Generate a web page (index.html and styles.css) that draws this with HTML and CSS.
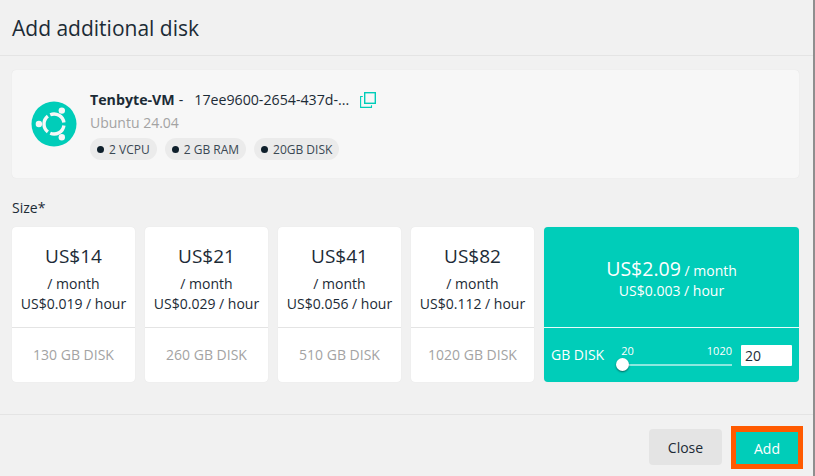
FILE: index.html
```html
<!DOCTYPE html>
<html lang="en">

<head>
  <meta charset="UTF-8">
  <meta name="viewport" content="width=device-width, initial-scale=1.0">
  <title>Add additional disk</title>
  <link rel="stylesheet" href="styles.css">
</head>

<body>
  <div class="modal">
    <header class="modal-head">
      <h1>Add additional disk</h1>
    </header>

    <div class="modal-body">
      <section class="vm-box">
        <svg class="os-logo" viewBox="0 0 46 46" width="46" height="46">
          <circle cx="23" cy="23" r="22.5" fill="#00cdb9"/>
          <g fill="none" stroke="#f7f7f7" stroke-width="3.4">
            <path d="M32.9 24.4A10 10 0 0 1 19.25 32.27"/>
            <path d="M16.84 30.88A10 10 0 0 1 16.84 15.12"/>
            <path d="M19.25 13.73A10 10 0 0 1 32.9 21.6"/>
          </g>
          <circle cx="7.9" cy="23" r="3.2" fill="#f7f7f7"/>
          <circle cx="30.8" cy="9.6" r="3.2" fill="#f7f7f7"/>
          <circle cx="30.8" cy="36.2" r="3.2" fill="#f7f7f7"/>
        </svg>
        <div class="vm-info">
          <div class="vm-title">
            <strong>Tenbyte-VM</strong><span class="dash">-</span><span class="vm-id">17ee9600-2654-437d-...</span>
            <svg class="copy-icon" viewBox="0 0 16 16" width="16" height="16">
              <rect x="4.7" y="0.7" width="10.6" height="10.6" fill="none" stroke="#00cdb9" stroke-width="1.4"/>
              <path d="M2.8 4.5H0.6V15.4H11.5V13.2" fill="none" stroke="#00cdb9" stroke-width="1.1"/>
            </svg>
          </div>
          <div class="vm-os">Ubuntu 24.04</div>
          <div class="chips">
            <span class="chip"><i></i>2 VCPU</span>
            <span class="chip"><i></i>2 GB RAM</span>
            <span class="chip"><i></i>20GB DISK</span>
          </div>
        </div>
      </section>

      <div class="size-label">Size*</div>

      <div class="plans">
        <div class="plan">
          <div class="plan-price">
            <div class="big">US$14</div>
            <div>/ month</div>
            <div>US$0.019 / hour</div>
          </div>
          <div class="plan-disk">130 GB DISK</div>
        </div>
        <div class="plan">
          <div class="plan-price">
            <div class="big">US$21</div>
            <div>/ month</div>
            <div>US$0.029 / hour</div>
          </div>
          <div class="plan-disk">260 GB DISK</div>
        </div>
        <div class="plan">
          <div class="plan-price">
            <div class="big">US$41</div>
            <div>/ month</div>
            <div>US$0.056 / hour</div>
          </div>
          <div class="plan-disk">510 GB DISK</div>
        </div>
        <div class="plan">
          <div class="plan-price">
            <div class="big">US$82</div>
            <div>/ month</div>
            <div>US$0.112 / hour</div>
          </div>
          <div class="plan-disk">1020 GB DISK</div>
        </div>

        <div class="plan custom">
          <div class="custom-price">
            <div><span class="big">US$2.09</span> / month</div>
            <div>US$0.003 / hour</div>
          </div>
          <div class="custom-disk">
            <span class="custom-label">GB DISK</span>
            <div class="slider">
              <div class="slider-marks"><span>20</span><span>1020</span></div>
              <div class="slider-track"><span class="slider-thumb"></span></div>
            </div>
            <input class="disk-input" type="text" value="20">
          </div>
        </div>
      </div>
    </div>

    <footer class="modal-foot">
      <button class="btn btn-close" type="button">Close</button>
      <button class="btn btn-add" type="button">Add</button>
    </footer>
  </div>
</body>
</html>
```

FILE: styles.css
```css
:root {
  --teal: #00cdb9;
  --text-color: #1c2b36;
  --muted: #a3a3a3;
  --line: #e4e4e4;
}
html {
  font-family: "Open Sans", "Noto Sans", Arial, sans-serif;
}
body {
  margin: 0;
  background: #fff;
  color: var(--text-color);
}
.modal {
  width: 813px;
  height: 476px;
  background: #f1f1f1;
  border-right: 2px solid #8f8f8f;
  display: flex;
  flex-direction: column;
  overflow: hidden;
}
.modal-head {
  height: 56px;
  box-sizing: border-box;
  flex: none;
  padding: 13px 12px 0;
  border-bottom: 1px solid var(--line);
}
h1 {
  margin: 0;
  font-size: 21px;
  line-height: 30px;
  font-weight: 400;
}
.modal-body {
  flex: 1;
  padding: 14px 14px 0 12px;
}
.vm-box {
  height: 108px;
  box-sizing: border-box;
  background: #f7f7f7;
  border-radius: 4px;
  box-shadow: 0 0 1px rgba(0,0,0,.1);
  display: flex;
  align-items: center;
  padding: 2px 18px 0 19px;
  gap: 13px;
}
.os-logo { flex: none; margin-top: -2px; }
.vm-title {
  display: flex;
  align-items: center;
  font-size: 14.2px;
  line-height: 20px;
}
.vm-title strong { font-weight: 700; }
.dash { margin: 0 11px 0 4px; }
.copy-icon { margin-left: 11px; }
.vm-os {
  font-size: 14px;
  line-height: 20px;
  color: var(--muted);
  margin-top: 3px;
}
.chips {
  display: flex;
  gap: 8px;
  margin-top: 5px;
}
.chip {
  display: flex;
  align-items: center;
  height: 22px;
  padding: 0 7px;
  border-radius: 11px;
  background: #ebebeb;
  font-size: 12px;
  color: #3a4853;
}
.chip i {
  width: 7px;
  height: 7px;
  border-radius: 50%;
  background: #0e1f2b;
  margin-right: 5px;
}
.size-label {
  font-size: 14px;
  line-height: 20px;
  margin-top: 20px;
}
.plans {
  display: flex;
  gap: 10px;
  margin-top: 9px;
}
.plan {
  width: 123px;
  height: 155px;
  flex: none;
  background: #fff;
  border-radius: 4px;
  box-shadow: 0 0 1px rgba(0,0,0,.1);
  text-align: center;
  font-size: 14px;
  line-height: 20px;
}
.plan-price {
  height: 101px;
  box-sizing: border-box;
  padding-top: 15px;
  border-bottom: 1px solid var(--line);
  white-space: nowrap;
}
.plan-price .big {
  font-size: 19px;
  line-height: 28px;
  margin-bottom: 4px;
}
.plan-disk {
  line-height: 54px;
  color: var(--muted);
}
.plan.custom {
  width: 255px;
  background: var(--teal);
  color: #fff;
}
.custom-price {
  height: 101px;
  box-sizing: border-box;
  padding-top: 32px;
  border-bottom: 1px solid #e8fbf9;
}
.custom-price .big {
  font-size: 19.5px;
}
.custom-disk {
  display: flex;
  align-items: center;
  padding: 0 7px;
  height: 54px;
}
.custom-label { white-space: nowrap; }
.slider {
  width: 116px;
  margin-left: 12px;
  margin-right: 9px;
}
.slider-marks {
  display: flex;
  justify-content: space-between;
  font-size: 11px;
  line-height: 14px;
  padding-left: 5px;
}
.slider-track {
  position: relative;
  height: 2px;
  margin-top: 6px;
  background: rgba(255,255,255,.55);
}
.slider-thumb {
  position: absolute;
  left: 0;
  top: -6px;
  width: 13px;
  height: 13px;
  border-radius: 50%;
  background: #fff;
  box-shadow: 0 1px 2px rgba(0,0,0,.5);
}
.disk-input {
  width: 51px;
  height: 21px;
  box-sizing: border-box;
  border: none;
  padding: 0 4px;
  font: 14px "Open Sans", "Noto Sans", Arial, sans-serif;
  color: var(--text-color);
  background: #fff;
  border-radius: 1px;
}
.modal-foot {
  height: 62px;
  flex: none;
  box-sizing: border-box;
  border-top: 1px solid var(--line);
  display: flex;
  justify-content: flex-end;
  align-items: flex-start;
  padding: 14px 10px 0 0;
  gap: 9px;
}
.btn {
  border: none;
  font: 14px "Open Sans", "Noto Sans", Arial, sans-serif;
  height: 36px;
  padding: 0;
}
.btn-close {
  width: 73px;
  background: #e4e4e4;
  color: var(--text-color);
  border-radius: 4px;
}
.btn-add {
  width: 72px;
  height: 43px;
  margin-top: -3px;
  box-sizing: border-box;
  background: var(--teal);
  color: #fff;
  border: 5px solid #ff5a00;
  border-top-width: 6px;
}
```
